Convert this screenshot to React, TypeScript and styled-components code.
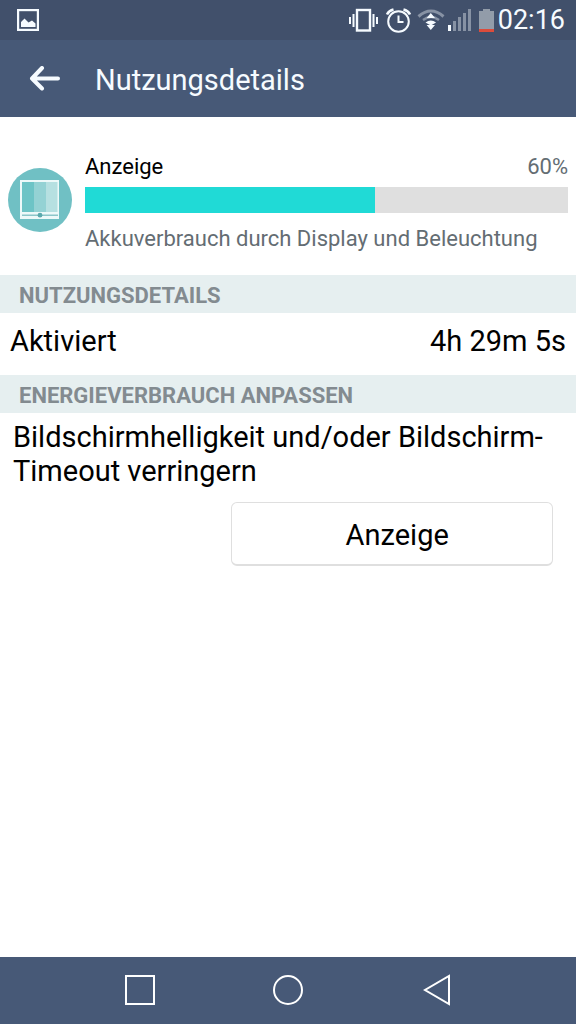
import React from "react";
import styled, { createGlobalStyle } from "styled-components";

const GlobalStyle = createGlobalStyle`
  *, *::before, *::after { box-sizing: border-box; }
  body { margin: 0; background: #fff; font-family: Roboto, sans-serif; color: #000; }
  svg { display: block; flex: none; }
`;

const Screen = styled.div`
  min-height: 100vh;
  display: flex;
  flex-direction: column;
`;

const StatusBar = styled.div`
  height: 40px;
  display: flex;
  align-items: center;
  justify-content: space-between;
  padding: 0 11px 0 17px;
  background: #41506b;
  color: #f6fbff;
`;

const StatusIcons = styled.div`
  display: flex;
  align-items: center;
`;

const Battery = styled.div`
  margin: 0 4px 0 8px;
`;

const Clock = styled.time`
  padding-top: 1px;
  font-size: 27px;
  line-height: 39px;
`;

const AppBar = styled.header`
  height: 77px;
  display: flex;
  align-items: center;
  gap: 34px;
  padding: 0 29px;
  background: #475977;
  color: #f6fbff;
`;

const IconButton = styled.button`
  display: flex;
  align-items: center;
  justify-content: center;
  padding: 0;
  border: 0;
  background: none;
  color: inherit;
`;

const Title = styled.h1`
  margin: 0;
  padding-top: 2px;
  font-size: 29px;
  font-weight: 400;
  line-height: 40px;
`;

const Content = styled.main`
  flex: 1;
`;

const Summary = styled.section`
  display: flex;
  align-items: center;
  gap: 13px;
  padding: 28px 8px 20px;
`;

const SummaryBody = styled.div`
  flex: 1;
  padding-top: 6px;
`;

const SummaryLine = styled.div<{ $muted?: boolean }>`
  display: flex;
  justify-content: space-between;
  font-size: 22px;
  line-height: 32px;
  color: ${({ $muted }) => ($muted ? "#646d73" : "#000")};
`;

const Percent = styled.span`
  color: #646d73;
`;

const Track = styled.div`
  height: 26px;
  margin: 4px 0 10px;
  background: #dfdfdf;
`;

const Fill = styled.div`
  height: 100%;
  background: #20dad6;
`;

const SectionTitle = styled.h2`
  margin: 0;
  padding: 4px 19px 0;
  background: #e6eff0;
  color: #838b90;
  font-size: 22px;
  font-weight: 700;
  line-height: 34px;
`;

const DetailRow = styled.div`
  display: flex;
  justify-content: space-between;
  padding: 11px 10px 17px;
  font-size: 29px;
  line-height: 34px;
`;

const Hint = styled.p`
  margin: 0;
  padding: 7px 13px 13px;
  font-size: 29px;
  line-height: 34px;
`;

const Actions = styled.div`
  display: flex;
  justify-content: flex-end;
  padding: 1px 23px 16px 17px;
`;

const ActionButton = styled.button`
  width: 60%;
  height: 64px;
  padding: 3px 0 0 10px;
  border: 1px solid #dfdfdf;
  border-bottom-width: 2px;
  border-radius: 6px;
  background: #fff;
  color: #000;
  font: 400 29px/34px Roboto, sans-serif;
`;

const NavBar = styled.nav`
  height: 67px;
  display: flex;
  align-items: center;
  justify-content: center;
  gap: 116px;
  padding-bottom: 2px;
  background: #475977;
  color: #fff;
`;

function PictureIcon() {
  return (
    <svg width="22" height="22" viewBox="0 0 22 22" aria-hidden="true">
      <rect x="1" y="1" width="20" height="20" fill="none" stroke="currentColor" strokeWidth="2.4" />
      <path d="M4 18v-5l3.500-3.500 4 4 3.500-2 3.500 3v3.500z" fill="currentColor" />
    </svg>
  );
}

function SystemIcons() {
  return (
    <svg width="122" height="26" viewBox="349 7 122 26" fill="none" role="img" aria-label="Vibration, Wecker, WLAN, Mobilfunk">
      <g stroke="#f6fbff" strokeWidth="2">
        <rect x="357" y="10" width="13" height="20.500" strokeWidth="2.400" />
        <path d="M353.500 14v13M373.500 14v13" />
        <path d="M350 17v7M377 17v7" />
        <circle cx="398.500" cy="21.500" r="10.300" />
        <path d="M398.500 15.500v6.500h5" />
        <path d="M387 14.500q2-4 6.500-5M410 14.500q-2-4-6.500-5" strokeWidth="2.600" />
      </g>
      <path d="M418.500 16.500q12.500-11 25 0" stroke="#8792a4" strokeWidth="3" />
      <path d="M423 20q8-6 16 0" stroke="#8792a4" strokeWidth="2.400" />
      <path d="M430.800 13l4.200 5h-8.400zM430.800 30l-4.200-5h8.400z" fill="#f6fbff" />
      <path d="M425.500 22.500q5.300-4 10.600 0l-5.300 3z" fill="#f6fbff" />
      <path d="M448 25h3v6h-3z" fill="#f6fbff" />
      <path d="M453 21h3v10h-3zM458 17h3v14h-3zM463 13h3v18h-3zM468 9h3v22h-3z" fill="#8792a4" />
    </svg>
  );
}

function BatteryIcon() {
  return (
    <svg width="15" height="23" viewBox="0 0 15 23" role="img" aria-label="Akku schwach">
      <path d="M4 0h7v2h4v21H0V2h4z" fill="#929ca9" />
      <path d="M0 20h15v3H0z" fill="#dc4c3b" />
    </svg>
  );
}

function BackArrow() {
  return (
    <svg width="32" height="26" viewBox="0 0 32 26" fill="none" stroke="currentColor" strokeWidth="4" strokeLinecap="round" strokeLinejoin="round" aria-hidden="true">
      <path d="M13 2L3 12.500l10 10M3 12.500h26" />
    </svg>
  );
}

function DisplayIcon() {
  return (
    <svg width="64" height="64" viewBox="0 0 64 64" aria-hidden="true">
      <circle cx="32" cy="32" r="32" fill="#70c0c4" />
      <path d="M12 12h39v39H12z" fill="#edf9f9" />
      <path d="M14 14h12v30H14z" fill="#6dc4c6" />
      <path d="M26 14h12v30H26z" fill="#94d2d4" />
      <path d="M38 14h11.500v30H38z" fill="#b6e0e1" />
      <path d="M14 46.500h36v1.500H14z" fill="#8cc6c9" />
      <circle cx="32" cy="47.200" r="2.400" fill="#5ba9ad" />
    </svg>
  );
}

export default function App() {
  const share = 60;
  return (
    <Screen>
      <GlobalStyle />
      <StatusBar>
        <PictureIcon />
        <StatusIcons>
          <SystemIcons />
          <Battery>
            <BatteryIcon />
          </Battery>
          <Clock>02:16</Clock>
        </StatusIcons>
      </StatusBar>
      <AppBar>
        <IconButton aria-label="Zurück">
          <BackArrow />
        </IconButton>
        <Title>Nutzungsdetails</Title>
      </AppBar>
      <Content>
        <Summary>
          <DisplayIcon />
          <SummaryBody>
            <SummaryLine>
              <span>Anzeige</span>
              <Percent>{share}%</Percent>
            </SummaryLine>
            <Track role="progressbar" aria-label="Anzeige" aria-valuenow={share} aria-valuemin={0} aria-valuemax={100}>
              <Fill style={{ width: `${share}%` }} />
            </Track>
            <SummaryLine $muted>Akkuverbrauch durch Display und Beleuchtung</SummaryLine>
          </SummaryBody>
        </Summary>
        <SectionTitle>NUTZUNGSDETAILS</SectionTitle>
        <DetailRow>
          <span>Aktiviert</span>
          <span>4h 29m 5s</span>
        </DetailRow>
        <SectionTitle>ENERGIEVERBRAUCH ANPASSEN</SectionTitle>
        <Hint>Bildschirmhelligkeit und/oder Bildschirm-Timeout verringern</Hint>
        <Actions>
          <ActionButton>Anzeige</ActionButton>
        </Actions>
      </Content>
      <NavBar>
        <IconButton aria-label="Letzte Apps">
          <svg width="32" height="32" viewBox="0 0 32 32" fill="none" stroke="currentColor" strokeWidth="2">
            <path d="M2 2h28v28H2z" />
          </svg>
        </IconButton>
        <IconButton aria-label="Startseite">
          <svg width="32" height="32" viewBox="0 0 32 32" fill="none" stroke="currentColor" strokeWidth="2">
            <circle cx="16" cy="16" r="14" />
          </svg>
        </IconButton>
        <IconButton aria-label="Zurück">
          <svg width="32" height="32" viewBox="0 0 32 32" fill="none" stroke="currentColor" strokeWidth="2">
            <path d="M29 2v28L5 16z" />
          </svg>
        </IconButton>
      </NavBar>
    </Screen>
  );
}
